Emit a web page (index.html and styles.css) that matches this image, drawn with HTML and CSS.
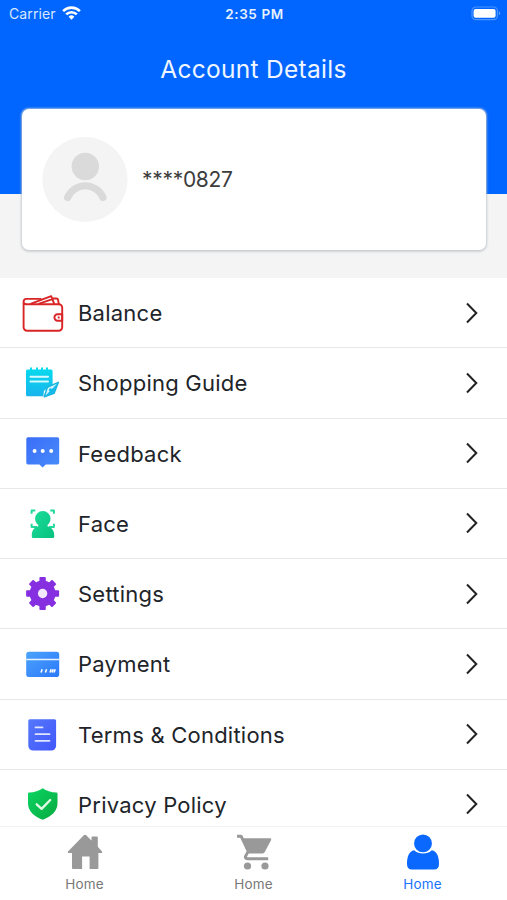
FILE: index.html
```html
<!DOCTYPE html>
<html lang="en">
<head>
  <meta charset="UTF-8" />
  <meta name="viewport" content="width=device-width, initial-scale=1.0" />
  <title>Account Details</title>
  <link rel="stylesheet" href="styles.css">
</head>
<body>
  <div class="screen">
    <header class="header">
      <div class="status-bar">
        <div class="status-left">
          <span class="carrier">Carrier</span>
          <svg class="wifi" width="19" height="14" viewBox="0 0 19 14">
            <g fill="none" stroke="#fff" stroke-width="2.6">
              <path d="M1.1 5.1a12 12 0 0 1 16.8 0" />
              <path d="M4.2 8.4a7.6 7.6 0 0 1 10.6 0" />
            </g>
            <path d="M9.5 13.8l-2.9-3.1a4.2 4.2 0 0 1 5.8 0z" fill="#fff" />
          </svg>
        </div>
        <span class="clock">2:35 PM</span>
        <div class="status-right">
          <svg class="battery" width="31" height="15" viewBox="0 0 31 15">
            <rect x="2" y="1" width="25.4" height="12.6" rx="3.8" fill="none" stroke="#4d94ff" stroke-width="1.2" />
            <rect x="3.6" y="2.9" width="22" height="8.8" rx="2" fill="#fff" />
            <path d="M28.9 5.3a2.3 2.3 0 0 1 0 4z" fill="#66a3ff" />
          </svg>
        </div>
      </div>
      <h1 class="title">Account Details</h1>
    </header>

    <section class="profile">
      <div class="card">
        <svg class="avatar" width="86" height="86" viewBox="0 0 86 86">
          <circle cx="43" cy="42.5" r="42.6" fill="#f4f4f4" />
          <circle cx="43.3" cy="29.5" r="13.7" fill="#dadada" />
          <path d="M25.6 60.5a19.2 19.2 0 0 1 35.4 0" fill="none" stroke="#dadada" stroke-width="7.2" stroke-linecap="round" />
        </svg>
        <span class="phone">****0827</span>
      </div>
    </section>

    <main class="menu">
      <div class="item">
        <svg class="icon" viewBox="0 0 44 44" fill="none" stroke="#d92525" stroke-width="1.9" stroke-linejoin="round">
          <path d="M2.6 10.8v25.4a3.6 3.6 0 0 0 3.6 3.6h31.4a3.6 3.6 0 0 0 3.600-3.600V16.500a3.300 3.300 0 0 0-3.300-3.300H5a2.400 2.400 0 0 1-2.400-2.400C2.600 9 3.800 7.900 5.400 7.900h15" />
          <path d="M9.500 12.800L30.200 5.200l3 7.600M17.500 12.800l14-4.600M32 7.500h3.200c1.300 0 1.900.7 2 1.900l.5 3.800" />
          <path d="M41.200 23.300h-4.600a3.200 3.200 0 0 0 0 6.400h4.600zM37.700 25.600v1.800" />
        </svg>
        <span class="label">Balance</span>
        <svg class="chevron" viewBox="0 0 12 22"><path d="M1 1.500L10.300 11 1 20.500" /></svg>
      </div>
      <div class="item">
        <svg class="icon" viewBox="0 0 44 44">
          <defs>
            <linearGradient id="cyan" x1="0" y1="0" x2="0" y2="1">
              <stop offset="0" stop-color="#05dcee" /><stop offset="1" stop-color="#18b4ed" />
            </linearGradient>
          </defs>
          <path d="M6.500 8.500H9V7.300a1 1 0 0 1 2 0v1.200h4V7.300a1 1 0 0 1 2 0v1.200h3V7.300a1 1 0 0 1 2 0v1.200h3V7.300a1 1 0 0 1 2 0v1.200h3.100a1.500 1.500 0 0 1 1.500 1.500v13.500L23 29.800l-.7 5.400H6.500A1.500 1.500 0 0 1 5 33.700V10a1.500 1.500 0 0 1 1.500-1.500z" fill="url(#cyan)" />
          <path d="M9.500 15.800h17.500M9.500 20.500h17.500" stroke="#d5faff" stroke-width="2" stroke-linecap="round" />
          <path d="M37.300 21.400l-4.300 11-9.700 3.400 3-9.600z" fill="#d5f8ff" stroke="#1bb4dd" stroke-width="1.500" stroke-linejoin="round" />
          <path d="M23.600 35.500l6.600-6.800 7-7.200-4.300 10.900z" fill="#16b9e8" />
          <circle cx="29.600" cy="29" r="1.700" fill="#16b9e8" />
        </svg>
        <span class="label">Shopping Guide</span>
        <svg class="chevron" viewBox="0 0 12 22"><path d="M1 1.500L10.300 11 1 20.500" /></svg>
      </div>
      <div class="item">
        <svg class="icon" viewBox="0 0 44 44">
          <defs>
            <linearGradient id="blue" x1="0" y1="0" x2="1" y2="1">
              <stop offset="0" stop-color="#3b6df8" /><stop offset="1" stop-color="#478cfa" />
            </linearGradient>
          </defs>
          <path d="M7 6.200h29.500a1.700 1.700 0 0 1 1.700 1.700v23.800a1.700 1.700 0 0 1-1.700 1.700H24.800l-3.200 3.200-3.200-3.200H7a1.700 1.700 0 0 1-1.700-1.700V7.900A1.700 1.700 0 0 1 7 6.200z" fill="url(#blue)" />
          <g fill="#fff"><circle cx="13.600" cy="20" r="2" /><circle cx="21.700" cy="20" r="2" /><circle cx="30.200" cy="20" r="2" /></g>
        </svg>
        <span class="label">Feedback</span>
        <svg class="chevron" viewBox="0 0 12 22"><path d="M1 1.500L10.300 11 1 20.500" /></svg>
      </div>
      <div class="item">
        <svg class="icon" viewBox="0 0 44 44">
          <defs>
            <linearGradient id="green" x1="0" y1="0" x2="1" y2="1">
              <stop offset="0" stop-color="#1fdc9c" /><stop offset="1" stop-color="#07c27e" />
            </linearGradient>
          </defs>
          <path d="M10.600 12.800V9.500h3.700M29.200 9.500h3.700v3.300M10.600 22.800v3.300H16M32.900 22.800v3.300H28" fill="none" stroke="#25d99c" stroke-width="2" stroke-linejoin="round" />
          <path d="M21.800 9.900a7.700 7.700 0 0 1 7.700 7.700c0 3-1.200 5-3 6.500v1.100c3.900 1 6.700 4.300 6.700 8.400v2.200a1.200 1.200 0 0 1-1.200 1.200H12a1.200 1.200 0 0 1-1.200-1.200v-2.200c0-4.100 2.600-7.400 6.500-8.400v-1.100c-2-1.500-3.200-3.500-3.200-6.500a7.700 7.700 0 0 1 7.700-7.700z" fill="url(#green)" />
        </svg>
        <span class="label">Face</span>
        <svg class="chevron" viewBox="0 0 12 22"><path d="M1 1.500L10.300 11 1 20.500" /></svg>
      </div>
      <div class="item">
        <svg class="icon" viewBox="0 0 44 44">
          <g fill="#862fe0" transform="translate(21.600 21.500)">
            <g id="teeth">
              <rect x="-3.200" y="-16.500" width="6.400" height="33" rx="1" />
              <rect x="-16.500" y="-3.200" width="33" height="6.400" rx="1" />
            </g>
            <use href="#teeth" transform="rotate(45)" />
            <circle r="13" />
            <circle r="4.700" fill="#f3e8ff" />
          </g>
        </svg>
        <span class="label">Settings</span>
        <svg class="chevron" viewBox="0 0 12 22"><path d="M1 1.500L10.300 11 1 20.500" /></svg>
      </div>
      <div class="item">
        <svg class="icon" viewBox="0 0 44 44">
          <defs>
            <linearGradient id="card" x1="0" y1="0" x2="1" y2="1">
              <stop offset="0" stop-color="#4ba3fb" /><stop offset="1" stop-color="#2b78fb" />
            </linearGradient>
          </defs>
          <rect x="5.200" y="9.700" width="33" height="25.300" rx="2.800" fill="url(#card)" />
          <path d="M5.200 17.400h33" stroke="#e6f3ff" stroke-width="1.500" />
          <path d="M20 30.600l1.200-3.400M24.400 30.600l1.200-3.400M29 30.600l1.200-3.400M31 30.600l1.200-3.400M33 30.600l1.200-3.400" stroke="#fff" stroke-width="1.600" />
        </svg>
        <span class="label">Payment</span>
        <svg class="chevron" viewBox="0 0 12 22"><path d="M1 1.500L10.300 11 1 20.500" /></svg>
      </div>
      <div class="item">
        <svg class="icon" viewBox="0 0 44 44">
          <defs>
            <linearGradient id="indigo" x1="0" y1="0" x2="1" y2="1">
              <stop offset="0" stop-color="#5578fb" /><stop offset="1" stop-color="#4156fb" />
            </linearGradient>
          </defs>
          <path d="M8.900 7.200h24.600a1.600 1.600 0 0 1 1.600 1.600v25a4.800 4.800 0 0 1-4.800 4.800H12.100a4.800 4.800 0 0 1-4.800-4.800v-25a1.600 1.600 0 0 1 1.600-1.600z" fill="url(#indigo)" />
          <path d="M14.500 15.400h7M14.500 22.200h14M14.500 28.800h14" stroke="#dfe5ff" stroke-width="1.800" stroke-linecap="round" />
        </svg>
        <span class="label">Terms &amp; Conditions</span>
        <svg class="chevron" viewBox="0 0 12 22"><path d="M1 1.500L10.300 11 1 20.500" /></svg>
      </div>
      <div class="item">
        <svg class="icon" viewBox="0 0 44 44">
          <defs>
            <linearGradient id="shield" x1="0" y1="0" x2="1" y2="1">
              <stop offset="0" stop-color="#0bd663" /><stop offset="1" stop-color="#07a83f" />
            </linearGradient>
          </defs>
          <path d="M21.700 6.300c3.600 2.700 8.500 4.100 13.600 4.200a1.200 1.200 0 0 1 1.200 1.200v9.600c0 8-6.500 13.500-14.800 16.500C13.400 34.800 7 29.300 7 21.300v-9.600a1.200 1.200 0 0 1 1.200-1.200c5.100-.1 9.900-1.500 13.500-4.200z" fill="url(#shield)" />
          <path d="M15.700 22.300l4.900 4.600 8.600-8.900" fill="none" stroke="#dffbe6" stroke-width="2.300" stroke-linecap="round" stroke-linejoin="round" />
        </svg>
        <span class="label">Privacy Policy</span>
        <svg class="chevron" viewBox="0 0 12 22"><path d="M1 1.500L10.300 11 1 20.500" /></svg>
      </div>
    </main>

    <nav class="tabs">
      <div class="tab">
        <svg class="tab-icon" viewBox="0 0 36 36">
          <path d="M18 .8a1.500 1.500 0 0 1 1.200.5l5.300 5.300V3.500a1 1 0 0 1 1-1h4.300a1 1 0 0 1 1 1v9.300l4.200 4.700a.9.900 0 0 1-.7 1.500h-2.900v15a1 1 0 0 1-1 1h-7.800V22.500h-7.500V35H6a1 1 0 0 1-1-1V19H1.700A.9.900 0 0 1 1 17.500L16.800 1.300A1.500 1.500 0 0 1 18 .8z" fill="#999" />
        </svg>
        <span>Home</span>
      </div>
      <div class="tab">
        <svg class="tab-icon" viewBox="0 0 36 36" fill="#999">
          <path d="M1 .7h3.800c.9 0 1.500.4 1.900 1.200l1.100 2.400h26.300c1 0 1.400.9 1 1.700l-6.300 12c-.5.900-1.300 1.400-2.300 1.400H12.700l-1.600 3c-.2.500 0 .9.600.9h20.500v2.900H11.200c-2.700 0-4.100-2.500-2.900-4.800l2.300-4.200L4.200 3.700H1z" />
          <circle cx="11.500" cy="32" r="3.600" />
          <circle cx="29" cy="32" r="3.600" />
        </svg>
        <span>Home</span>
      </div>
      <div class="tab active">
        <svg class="tab-icon" viewBox="0 0 36 36" fill="#0a68fe">
          <circle cx="18" cy="9.400" r="8.900" />
          <path d="M9.200 16.300C11.400 18.500 14.500 19.600 18 19.600s6.600-1.100 8.800-3.300c5 .8 7.200 6 7.200 13.600 0 3.600-1.600 5.500-4.800 5.500H6.800C3.600 35.400 2 33.500 2 29.900c0-7.600 2.200-12.800 7.200-13.600z" />
        </svg>
        <span>Home</span>
      </div>
    </nav>
  </div>
</body>
</html>
```
FILE: styles.css
```css
* { box-sizing: border-box; }
body { margin: 0; font-family: Inter, "Liberation Sans", sans-serif; background: #fff; color: #212429; }
.screen { display: flex; flex-direction: column; height: 900px; overflow: hidden; }

.header { height: 194px; flex: none; background: #0066ff; color: #fff; }
.status-bar {
  display: grid; grid-template-columns: 1fr auto 1fr; align-items: center;
  height: 28px; padding: 0 6px 0 9px;
}
.status-left { display: flex; align-items: center; gap: 6px; }
.status-right { display: flex; justify-content: flex-end; }
.wifi { margin-bottom: 3px; }
.battery { margin-bottom: 1px; }
.carrier { font-size: 14px; letter-spacing: 0.1px; margin-bottom: 1px; color: #d9e8ff; }
.clock { font-size: 13.5px; font-weight: 600; letter-spacing: 0.6px; margin-right: 1px; color: #e8f1ff; }
.title {
  margin: 25px 0 0; font-size: 24.5px; line-height: 32px; font-weight: 400;
  letter-spacing: 0.3px; text-align: center; color: #f0f6ff;
}

.profile { flex: none; height: 84px; padding: 0 21px 0 22px; background: #f4f4f4; }
.card {
  display: flex; align-items: center; gap: 14px;
  height: 141px; margin-top: -85px; padding-left: 20px;
  background: #fff; border-radius: 7px;
  box-shadow: 0 0 2px 1px rgba(205, 212, 222, 0.75), 0 1px 3px rgba(0, 0, 0, 0.25);
}
.phone { font-size: 21px; letter-spacing: -0.3px; color: #3c3c3c; }

.menu { flex: 1; min-height: 0; overflow: hidden; }
.item {
  display: flex; align-items: center; height: 70.25px;
  padding: 0 29px 0 21px; border-bottom: 1px solid #e8e8e8;
}
.icon { width: 44px; height: 44px; flex: none; }
.label { flex: 1; margin-left: 13px; padding-top: 1px; font-size: 22px; letter-spacing: 0.23px; }
.chevron { width: 12px; height: 22px; fill: none; stroke: #222; stroke-width: 2; }

.tabs {
  display: flex; flex: none; height: 74px;
  background: #fff; border-top: 1px solid #f2f2f2;
}
.tab {
  flex: 1; display: flex; flex-direction: column; align-items: center;
  padding-top: 7px; font-size: 13.5px; line-height: 18px; letter-spacing: 0.2px; color: #777;
}
.tab-icon { width: 36px; height: 36px; margin-bottom: 5px; }
.tab.active { color: #1a72fe; }
```
